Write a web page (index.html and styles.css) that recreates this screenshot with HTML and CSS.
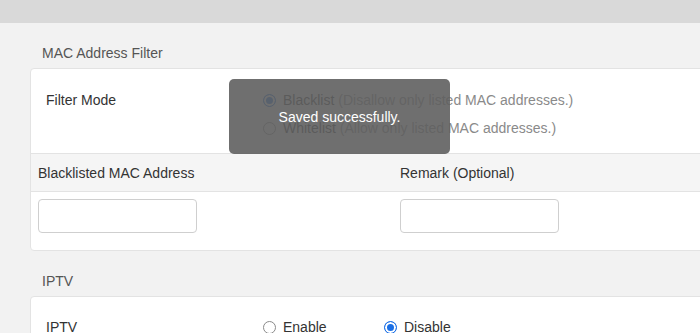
FILE: index.html
```html
<!DOCTYPE html>
<html lang="en">
<head>
<meta charset="utf-8">
<title>MAC Address Filter</title>
<link rel="stylesheet" href="styles.css">
</head>
<body>
<div class="topbar"></div>
<main class="page">
  <h2 class="section-title">MAC Address Filter</h2>
  <section class="card">
    <div class="mode-row">
      <div class="label">Filter Mode</div>
      <div class="options">
        <label class="opt"><span class="radio on"></span><span class="opt-name">Blacklist</span><span class="hint">&nbsp;(Disallow only listed MAC addresses.)</span></label>
        <label class="opt"><span class="radio"></span><span class="opt-name">Whitelist</span><span class="hint">&nbsp;(Allow only listed MAC addresses.)</span></label>
      </div>
    </div>
    <div class="table-head">
      <div class="th">Blacklisted MAC Address</div>
      <div class="th">Remark (Optional)</div>
    </div>
    <div class="table-row">
      <div class="td"><input class="field" type="text"></div>
      <div class="td"><input class="field" type="text"></div>
    </div>
  </section>

  <h2 class="section-title">IPTV</h2>
  <section class="card">
    <div class="iptv-row">
      <div class="label">IPTV</div>
      <div class="inline-options">
        <label class="opt inline"><span class="radio"></span><span class="opt-name">Enable</span></label>
        <label class="opt inline"><span class="radio on"></span><span class="opt-name">Disable</span></label>
      </div>
    </div>
  </section>
</main>
<div class="toast">Saved successfully.</div>
</body>
</html>
```
FILE: styles.css
```css
html, body {
  margin: 0;
  padding: 0;
  overflow: hidden;
}
body {
  background: #f2f2f2;
  font-family: "Liberation Sans", Arial, sans-serif;
  font-size: 14px;
  color: #333;
  position: relative;
  height: 333px;
}
.topbar {
  height: 23px;
  background: #d9d9d9;
}
.page {
  padding-left: 30px;
  width: 800px;
}
.section-title {
  margin: 0;
  padding: 22px 0 7px 12px;
  font-size: 14px;
  line-height: 16px;
  font-weight: normal;
  color: #555;
}
.card {
  width: 760px;
  background: #fff;
  border: 1px solid #e3e3e3;
  border-radius: 4px;
}
.mode-row {
  display: flex;
  padding: 17px 0 11px 15px;
}
.label {
  width: 217px;
  line-height: 28px;
  color: #333;
}
.options {
  display: flex;
  flex-direction: column;
}
.opt {
  display: flex;
  align-items: center;
  height: 28px;
  color: #333;
}
.radio {
  box-sizing: border-box;
  width: 13px;
  height: 13px;
  border-radius: 50%;
  border: 1px solid #8a8a8a;
  background: #fff;
  margin-right: 7px;
  flex: none;
}
.radio.on {
  border: 1.5px solid #1a6fe6;
  background: #1a6fe6;
  box-shadow: inset 0 0 0 2px #fff;
}
.hint {
  color: #8a8a8a;
}
.table-head {
  display: grid;
  grid-template-columns: 362px 1fr;
  padding-left: 7px;
  height: 37px;
  align-items: center;
  background: #f5f5f5;
  border-top: 1px solid #e3e3e3;
  border-bottom: 1px solid #e3e3e3;
}
.th {
  color: #333;
  line-height: 16px;
}
.table-row {
  display: grid;
  grid-template-columns: 362px 1fr;
  padding: 7px 0 17px 7px;
}
.field {
  box-sizing: border-box;
  display: block;
  width: 159px;
  height: 34px;
  margin: 0;
  border: 1px solid #cfcfcf;
  border-radius: 4px;
  background: #fff;
}
.iptv-row {
  display: flex;
  padding: 16px 0 20px 15px;
}
.inline-options {
  display: flex;
}
.opt.inline {
  width: 121px;
}
.toast {
  position: absolute;
  left: 229px;
  top: 79px;
  width: 221px;
  height: 75px;
  border-radius: 5px;
  background: rgba(95, 95, 95, 0.9);
  color: #fff;
  display: flex;
  align-items: center;
  justify-content: center;
  line-height: 16px;
}
```
